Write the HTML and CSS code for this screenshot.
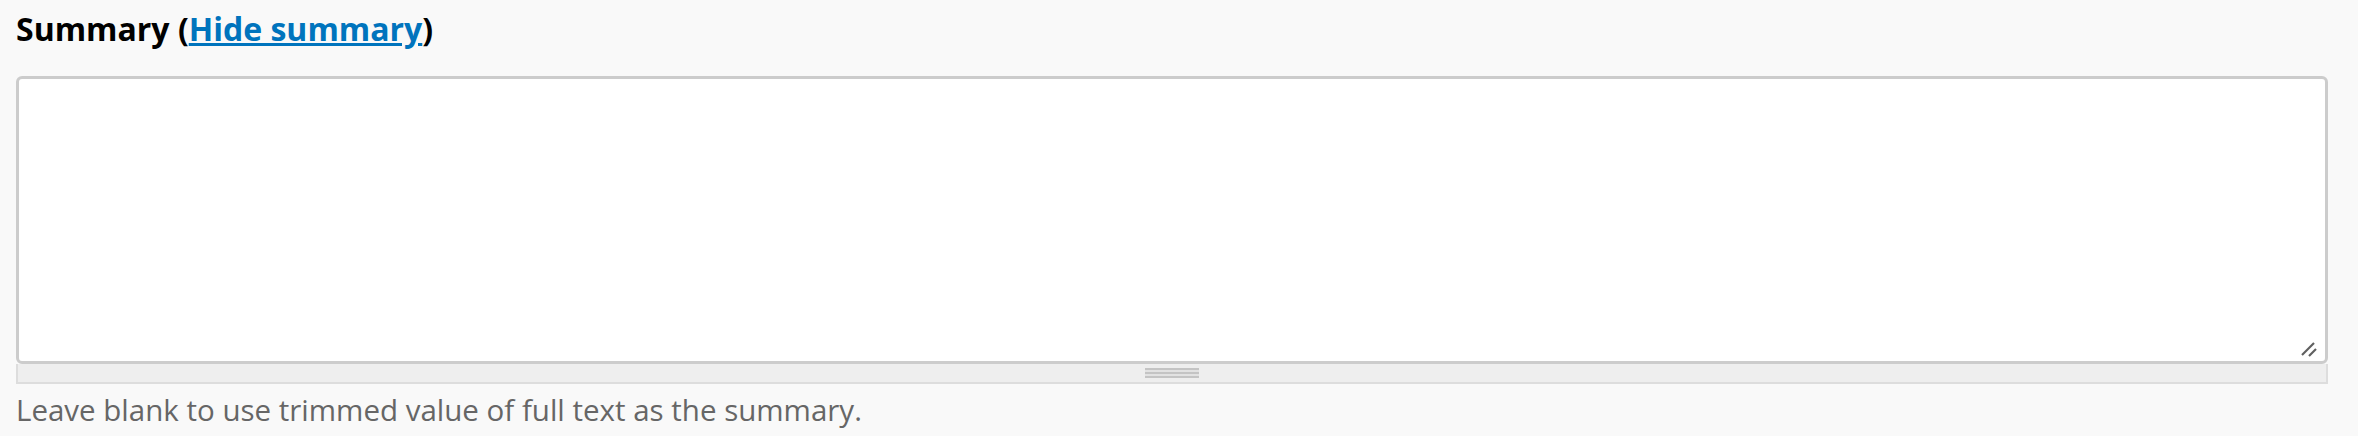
FILE: index.html
```html
<!DOCTYPE html>
<html lang="en">
<head>
    <meta charset="UTF-8">
    <title>Summary</title>
    <link rel="stylesheet" href="styles.css">
</head>
<body>
    <div class="form-item">
        <label class="form-label" for="edit-summary">
            Summary (<a href="#" class="link-toggle">Hide summary</a>)
        </label>
        <div class="resizable">
            <div class="textarea-wrap">
                <textarea id="edit-summary" class="form-textarea"></textarea>
                <svg class="resize-handle" width="22" height="22" viewBox="0 0 22 22">
                    <line x1="2" y1="16" x2="14" y2="4" />
                    <line x1="9" y1="17" x2="16" y2="10" />
                </svg>
            </div>
            <div class="grippie"><span class="grip"></span></div>
        </div>
        <div class="description">Leave blank to use trimmed value of full text as the summary.</div>
    </div>
</body>
</html>
```

FILE: styles.css
```css
* {
    margin: 0;
    padding: 0;
    box-sizing: border-box;
}

body {
    font-family: "Open Sans", "Liberation Sans", sans-serif;
    background: #f9f9f9;
    padding: 8px 30px 0 16px;
}

.form-label {
    display: block;
    font-size: 32px;
    font-weight: 700;
    line-height: 42px;
    color: #000;
    margin-bottom: 26px;
}

.link-toggle {
    color: #0074bd;
    text-decoration: underline;
}

.textarea-wrap {
    position: relative;
}

.form-textarea {
    display: block;
    width: 100%;
    height: 288px;
    border: 3px solid #ccc;
    border-radius: 6px;
    background: #fff;
    resize: none;
    font-family: inherit;
    font-size: 28px;
}

.resize-handle {
    position: absolute;
    right: 6px;
    bottom: 3px;
    stroke: #5f5f5f;
    stroke-width: 2.2;
}

.grippie {
    height: 20px;
    background: #eee;
    border: 2px solid #ddd;
    border-top: none;
    display: flex;
    justify-content: center;
    padding-top: 4px;
}

.grip {
    display: block;
    width: 54px;
    height: 10px;
    background: linear-gradient(#c4c4c4 0 2px, #e2e2e2 2px 4px, #c4c4c4 4px 6px, #e2e2e2 6px 8px, #c4c4c4 8px 10px);
}

.description {
    margin-top: 5px;
    font-size: 29.5px;
    line-height: 42px;
    color: #666;
}
```
